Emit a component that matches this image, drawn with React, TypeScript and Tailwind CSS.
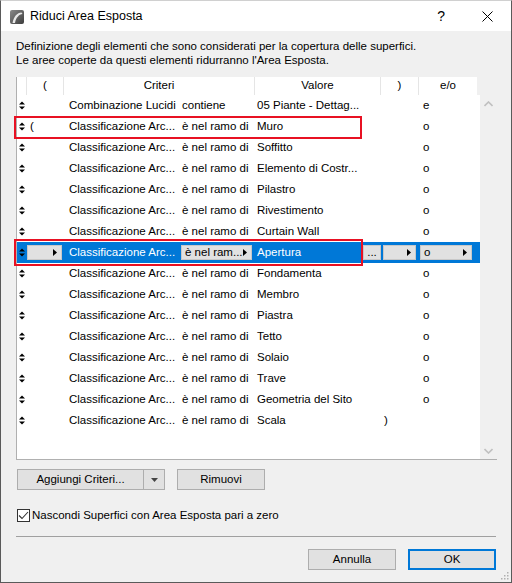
import React from "react";

type Row = { p: string; name: string; op: string; val: string; c: string; eo: string };

const rows: Row[] = [
  { p: "", name: "Combinazione Lucidi", op: "contiene", val: "05 Piante - Dettag...", c: "", eo: "e" },
  { p: "(", name: "Classificazione Arc...", op: "è nel ramo di", val: "Muro", c: "", eo: "o" },
  { p: "", name: "Classificazione Arc...", op: "è nel ramo di", val: "Soffitto", c: "", eo: "o" },
  { p: "", name: "Classificazione Arc...", op: "è nel ramo di", val: "Elemento di Costr...", c: "", eo: "o" },
  { p: "", name: "Classificazione Arc...", op: "è nel ramo di", val: "Pilastro", c: "", eo: "o" },
  { p: "", name: "Classificazione Arc...", op: "è nel ramo di", val: "Rivestimento", c: "", eo: "o" },
  { p: "", name: "Classificazione Arc...", op: "è nel ramo di", val: "Curtain Wall", c: "", eo: "o" },
  { p: "", name: "Classificazione Arc...", op: "è nel ram...", val: "Apertura", c: "", eo: "o" },
  { p: "", name: "Classificazione Arc...", op: "è nel ramo di", val: "Fondamenta", c: "", eo: "o" },
  { p: "", name: "Classificazione Arc...", op: "è nel ramo di", val: "Membro", c: "", eo: "o" },
  { p: "", name: "Classificazione Arc...", op: "è nel ramo di", val: "Piastra", c: "", eo: "o" },
  { p: "", name: "Classificazione Arc...", op: "è nel ramo di", val: "Tetto", c: "", eo: "o" },
  { p: "", name: "Classificazione Arc...", op: "è nel ramo di", val: "Solaio", c: "", eo: "o" },
  { p: "", name: "Classificazione Arc...", op: "è nel ramo di", val: "Trave", c: "", eo: "o" },
  { p: "", name: "Classificazione Arc...", op: "è nel ramo di", val: "Geometria del Sito", c: "", eo: "o" },
  { p: "", name: "Classificazione Arc...", op: "è nel ramo di", val: "Scala", c: ")", eo: "" },
];

const SortIcon = () => (
  <svg width="6" height="9" viewBox="0 0 6 9" className="ml-[2px] shrink-0">
    <path d="M0 3.5 L3 0.5 L6 3.5 Z" fill="#000" />
    <path d="M0 5.5 L3 8.5 L6 5.5 Z" fill="#000" />
  </svg>
);

const RightTri = () => (
  <svg width="4" height="7" viewBox="0 0 4 7" className="shrink-0">
    <path d="M0 0 L4 3.5 L0 7 Z" fill="#000" />
  </svg>
);

const Drop = ({ w, text, ml }: { w: string; text?: string; ml: string }) => (
  <div
    className={`${w} ${ml} h-[15px] bg-[#e1e1e1] border border-[#c8c8c8] flex items-center justify-between pl-[3px] pr-[4px] text-black`}
  >
    <span className="leading-none whitespace-nowrap">{text ?? ""}</span>
    <RightTri />
  </div>
);

export default function App() {
  return (
    <div
      className="w-[512px] h-[583px] bg-[#f0f0f0] border-x border-b border-t border-x-[#5a5a5a] border-b-[#5a5a5a] border-t-[#d0d0d0] flex flex-col text-[11.5px] text-black overflow-hidden"
      style={{ fontFamily: '"Liberation Sans", Arial, sans-serif' }}
    >
      {/* Title bar */}
      <div className="h-[30px] bg-white flex items-center shrink-0">
        <svg width="14" height="14" viewBox="0 0 14 14" className="ml-[9px] mt-[1px]">
          <defs>
            <linearGradient id="lg" x1="0" y1="0" x2="1" y2="1">
              <stop offset="0" stopColor="#8a8a8a" />
              <stop offset="1" stopColor="#3c3c3c" />
            </linearGradient>
          </defs>
          <rect x="0" y="0" width="14" height="14" rx="2" fill="url(#lg)" />
          <path d="M2.5 13 C4 6 7 3 11.5 2.5 L12.5 4 C9 4.5 6 7.5 5 13 Z" fill="#e8e8e8" />
        </svg>
        <span className="ml-[6px] text-[12.5px]">Riduci Area Esposta</span>
        <div className="flex-1" />
        <span className="text-[14px] mr-[37px]">?</span>
        <svg width="11" height="11" viewBox="0 0 11 11" className="mr-[18px]">
          <path d="M0.5 0.5 L10.5 10.5 M10.5 0.5 L0.5 10.5" stroke="#000" strokeWidth="1" />
        </svg>
      </div>

      {/* Description */}
      <div className="px-[15px] pt-[8px] leading-[14px] shrink-0">
        <div>Definizione degli elementi che sono considerati per la copertura delle superfici.</div>
        <div>Le aree coperte da questi elementi ridurranno l'Area Esposta.</div>
      </div>

      {/* Table */}
      <div className="relative ml-[15px] mt-[10px] w-[481px] h-[383px] border-l border-b border-[#b0b0b0] flex shrink-0">
        <div className="flex flex-col w-[464px]">
          {/* header */}
          <div className="h-[18px] flex shrink-0">
            <div className="w-[460px] bg-white flex">
              <div className="w-[10px] border-r border-[#e5e5e5]" />
              <div className="w-[37px] border-r border-[#e5e5e5] flex items-center justify-center">(</div>
              <div className="w-[191px] border-r border-[#e5e5e5] flex items-center justify-center">Criteri</div>
              <div className="w-[126px] border-r border-[#e5e5e5] flex items-center justify-center">Valore</div>
              <div className="w-[38px] border-r border-[#e5e5e5] flex items-center justify-center">)</div>
              <div className="w-[58px] flex items-center justify-center">e/o</div>
            </div>
            <div className="flex-1 bg-[#f0f0f0]" />
          </div>
          {/* body */}
          <div className="flex-1 bg-white flex flex-col">
            {rows.map((r, i) => {
              const sel = i === 7;
              if (sel) {
                return (
                  <div key={i} className="h-[21px] flex items-center bg-[#0078d7] text-white shrink-0">
                    <div className="w-[10px] flex items-center">
                      <SortIcon />
                    </div>
                    <div className="w-[37px] flex items-center">
                      <Drop w="w-[35px]" ml="ml-0" />
                    </div>
                    <div className="w-[115px] pl-[5px] whitespace-nowrap">{r.name}</div>
                    <div className="w-[76px] flex items-center">
                      <Drop w="w-[71px]" ml="ml-[2px]" text={r.op} />
                    </div>
                    <div className="w-[126px] flex items-center">
                      <span className="flex-1 pl-[2px] whitespace-nowrap">{r.val}</span>
                      <div className="w-[18px] h-[15px] bg-[#e1e1e1] border border-[#c8c8c8] text-black flex items-center justify-center leading-none">
                        ...
                      </div>
                    </div>
                    <div className="w-[38px] flex items-center">
                      <Drop w="w-[33px]" ml="ml-[2px]" />
                    </div>
                    <div className="w-[58px] flex items-center">
                      <Drop w="w-[52px]" ml="ml-[1px]" text="o" />
                    </div>
                  </div>
                );
              }
              return (
                <div key={i} className="h-[21px] flex items-center shrink-0">
                  <div className="w-[10px] flex items-center">
                    <SortIcon />
                  </div>
                  <div className="w-[37px] pl-[3px]">{r.p}</div>
                  <div className="w-[115px] pl-[5px] whitespace-nowrap">{r.name}</div>
                  <div className="w-[76px] pl-[3px] whitespace-nowrap">{r.op}</div>
                  <div className="w-[126px] pl-[2px] whitespace-nowrap">{r.val}</div>
                  <div className="w-[38px] pl-[3px]">{r.c}</div>
                  <div className="w-[58px] pl-[4px]">{r.eo}</div>
                </div>
              );
            })}
          </div>
        </div>
        {/* scrollbar */}
        <div className="w-[17px] flex flex-col">
          <div className="h-[18px]" />
          <div className="h-[17px] flex items-center justify-center">
            <svg width="9" height="6" viewBox="0 0 9 6">
              <path d="M0.5 5 L4.5 1 L8.5 5" stroke="#c0c0c0" strokeWidth="1.6" fill="none" />
            </svg>
          </div>
          <div className="flex-1" />
          <div className="h-[17px] flex items-center justify-center">
            <svg width="9" height="6" viewBox="0 0 9 6">
              <path d="M0.5 1 L4.5 5 L8.5 1" stroke="#c0c0c0" strokeWidth="1.6" fill="none" />
            </svg>
          </div>
        </div>

        {/* red highlight boxes */}
        <div className="absolute left-[-3px] top-[39px] w-[348px] h-[23px] border-2 border-[#e81123] pointer-events-none" />
        <div className="absolute left-[-3px] top-[162px] w-[349px] h-[27px] border-2 border-[#e81123] pointer-events-none" />
      </div>

      {/* Buttons row */}
      <div className="flex ml-[16px] mt-[9px] gap-[12px] shrink-0">
        <div className="w-[148px] h-[21px] bg-[#e1e1e1] border border-[#adadad] flex items-center">
          <div className="w-[126px] h-full flex items-center justify-center border-r border-[#adadad]">
            Aggiungi Criteri...
          </div>
          <div className="flex-1 flex items-center justify-center">
            <svg width="7" height="4" viewBox="0 0 7 4">
              <path d="M0 0 L7 0 L3.5 4 Z" fill="#444" />
            </svg>
          </div>
        </div>
        <div className="w-[88px] h-[21px] bg-[#e1e1e1] border border-[#adadad] flex items-center justify-center">
          Rimuovi
        </div>
      </div>

      {/* Checkbox */}
      <div className="flex items-center ml-[16px] mt-[17px] shrink-0">
        <div className="w-[13px] h-[13px] bg-white border border-[#333] flex items-center justify-center">
          <svg width="11" height="9" viewBox="0 0 11 9">
            <path d="M1 4.5 L4 7.5 L10 1" stroke="#333" strokeWidth="1.1" fill="none" />
          </svg>
        </div>
        <span className="ml-[2px]">Nascondi Superfici con Area Esposta pari a zero</span>
      </div>

      {/* separator */}
      <div className="ml-[15px] mt-[12px] w-[480px] h-px bg-[#a0a0a0] shrink-0" />

      {/* bottom buttons */}
      <div className="flex justify-end mr-[15px] mt-[12px] gap-[12px] shrink-0">
        <div className="w-[88px] h-[21px] bg-[#e1e1e1] border border-[#adadad] flex items-center justify-center">
          Annulla
        </div>
        <div className="w-[88px] h-[21px] bg-[#e1e1e1] border-2 border-[#0078d7] flex items-center justify-center">
          OK
        </div>
      </div>

      <div className="flex-1 flex items-end justify-end pr-[2px] pb-[2px]">
        <svg width="8" height="8" viewBox="0 0 8 8">
          <rect x="6" y="0" width="1.5" height="1.5" fill="#b0b0b0" />
          <rect x="3" y="3" width="1.5" height="1.5" fill="#b0b0b0" />
          <rect x="6" y="3" width="1.5" height="1.5" fill="#b0b0b0" />
          <rect x="0" y="6" width="1.5" height="1.5" fill="#b0b0b0" />
          <rect x="3" y="6" width="1.5" height="1.5" fill="#b0b0b0" />
          <rect x="6" y="6" width="1.5" height="1.5" fill="#b0b0b0" />
        </svg>
      </div>
    </div>
  );
}
